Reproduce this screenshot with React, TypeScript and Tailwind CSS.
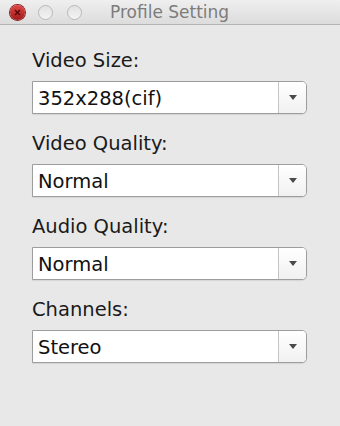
import React from 'react';

const font = { fontFamily: '"DejaVu Sans", "Liberation Sans", sans-serif' };

function Combo({ value }: { value: string }) {
  return (
    <div className="flex h-[33px] w-[275px] rounded-r-[5px] border border-[#9d9d9d] bg-white shadow-[0_1px_1px_rgba(0,0,0,0.08)]">
      <div className="flex-1 pl-[5px] pt-[5px] text-[19.5px] leading-[24px] text-[#111]">{value}</div>
      <div className="flex w-[28px] items-center justify-center rounded-r-[4px] border-l border-[#c4c4c4] bg-gradient-to-b from-white to-[#f1f1f1]">
        <svg width="10" height="7" viewBox="0 0 10 7">
          <path d="M1 1 L9 1 L5 6 Z" fill="#4a4a4a" />
        </svg>
      </div>
    </div>
  );
}

function Field({ label, value }: { label: string; value: string }) {
  return (
    <div className="flex flex-col gap-[8px]">
      <div className="text-[19.5px] leading-[24px] text-[#1a1a1a]">{label}</div>
      <Combo value={value} />
    </div>
  );
}

export default function App() {
  return (
    <div className="flex h-[426px] w-[340px] flex-col bg-[#e8e8e8]" style={font}>
      <div className="flex h-[25px] items-center border-b border-[#b3b3b3] bg-gradient-to-b from-[#efefef] to-[#dcdcdc]">
        <div className="ml-[10px] flex h-[15px] w-[15px] items-center justify-center rounded-full bg-gradient-to-b from-[#e04848] to-[#a01818] shadow-[0_0_0_1px_#8a2020]">
          <svg width="7" height="7" viewBox="0 0 7 7">
            <path d="M1 1 L6 6 M6 1 L1 6" stroke="#5a0a0a" strokeWidth="1.6" />
          </svg>
        </div>
        <div className="ml-[13px] h-[15px] w-[15px] rounded-full border border-[#b9b9b9] bg-gradient-to-b from-[#e2e2e2] to-[#f4f4f4]" />
        <div className="ml-[14px] h-[15px] w-[15px] rounded-full border border-[#b9b9b9] bg-gradient-to-b from-[#e2e2e2] to-[#f4f4f4]" />
        <div className="ml-[28px] text-[17px] leading-[20px] text-[#7c7c7c]">Profile Setting</div>
      </div>
      <div className="flex flex-col gap-[18px] pl-[32px] pt-[24px]">
        <Field label="Video Size:" value="352x288(cif)" />
        <Field label="Video Quality:" value="Normal" />
        <Field label="Audio Quality:" value="Normal" />
        <Field label="Channels:" value="Stereo" />
      </div>
    </div>
  );
}
